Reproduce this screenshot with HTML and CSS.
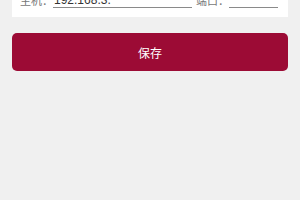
FILE: index.html
```html
<!DOCTYPE html>
<html lang="zh-CN">
<head>
    <meta charset="UTF-8">
    <meta name="viewport" content="width=device-width, initial-scale=1.0">
    <title>服务器设置</title>
    <link rel="stylesheet" href="styles.css">
</head>
<body>

    <!-- Server settings card (scrolled, top is cut off) -->
    <div class="card">
        <div class="row">
            <label class="label" for="host">主机：</label>
            <input id="host" class="field host" type="text" value="192.168.3.">
            <label class="label" for="port">端口：</label>
            <input id="port" class="field port" type="text" value="">
        </div>
    </div>

    <!-- Save button -->
    <button class="save">保存</button>

</body>
</html>
```

FILE: styles.css
```css
/* Page */
body {
    margin: 0;
    background-color: #f0f0f0;
    font-family: "Noto Sans CJK SC", "Noto Sans", sans-serif;
}

/* Settings card */
.card {
    margin: -18px 12px 0;
    padding: 10px 8px 9px;
    background-color: #fff;
}

.row {
    display: flex;
    align-items: flex-end;
    height: 16px;
}

.label {
    width: 33px;
    font-size: 11px;
    line-height: 16px;
    color: #777;
    white-space: nowrap;
}

.field {
    box-sizing: border-box;
    height: 16px;
    padding: 0 1px;
    border: none;
    border-bottom: 1px solid #8a8a8a;
    background: transparent;
    font-family: "Liberation Sans", sans-serif;
    font-size: 12px;
    line-height: 15px;
    color: #333;
    outline: none;
}

.field.host {
    width: 139px;
    margin-right: 4px;
}

.field.port {
    width: 49px;
}

/* Save button */
.save {
    display: block;
    width: 276px;
    height: 38px;
    margin: 16px 12px 0;
    border: none;
    border-radius: 5px;
    background-color: #9c0b35;
    color: #fff;
    font-family: "Noto Sans CJK SC", sans-serif;
    font-size: 12px;
    cursor: pointer;
}
```
